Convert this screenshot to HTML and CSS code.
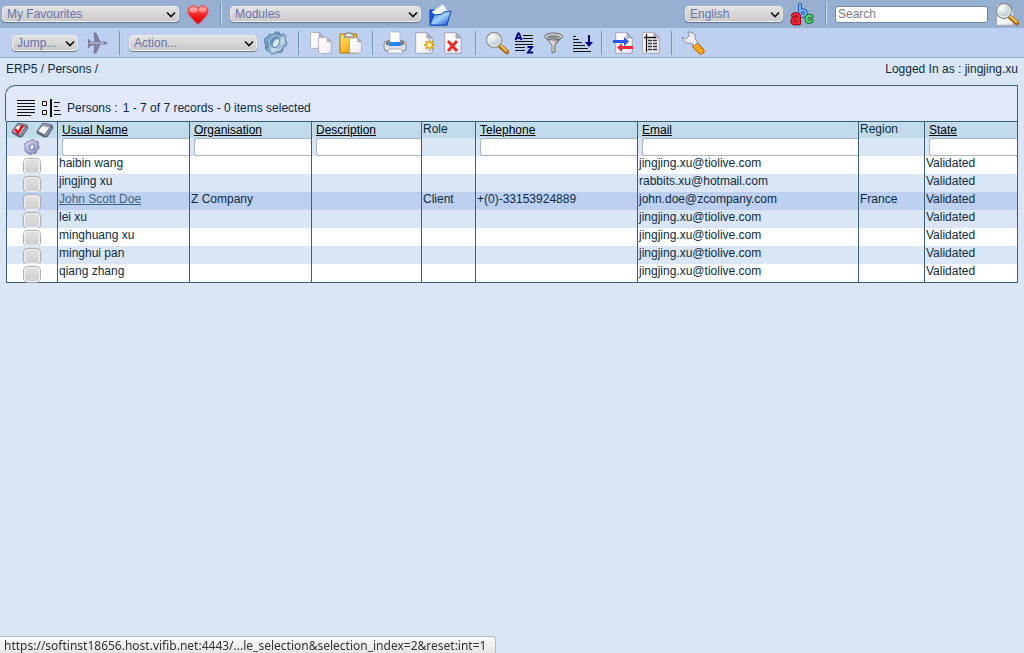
FILE: index.html
```html
<!DOCTYPE html>
<html lang="en">
<head>
<meta charset="utf-8">
<title>ERP5 - Persons</title>
<link rel="stylesheet" href="styles.css">
</head>
<body>
<svg class="defs" aria-hidden="true">
  <defs>
    <linearGradient id="steel" x2="1" y2="1"><stop stop-color="#a8c6de"/><stop offset=".4" stop-color="#5f8db3"/><stop offset=".6" stop-color="#bfd6e8"/><stop offset="1" stop-color="#386489"/></linearGradient>
    <linearGradient id="violet" x2="1" y2="1"><stop stop-color="#dedff5"/><stop offset="1" stop-color="#6f70a6"/></linearGradient>
    <linearGradient id="paper" x2="1" y2="1"><stop stop-color="#fff"/><stop offset=".6" stop-color="#f6f6fa"/><stop offset="1" stop-color="#dfe0ea"/></linearGradient>
    <linearGradient id="gold" x2="1" y2="1"><stop stop-color="#ffe98b"/><stop offset=".5" stop-color="#fbbd2d"/><stop offset="1" stop-color="#e08a00"/></linearGradient>
    <linearGradient id="metal" x2="1"><stop stop-color="#666"/><stop offset=".4" stop-color="#eee"/><stop offset="1" stop-color="#555"/></linearGradient>
    <linearGradient id="red" x2="0" y2="1"><stop stop-color="#ff8a80"/><stop offset=".5" stop-color="#f51f1f"/><stop offset="1" stop-color="#d90000"/></linearGradient>
    <linearGradient id="blue" x2="1" y2="1"><stop stop-color="#1c63e8"/><stop offset=".5" stop-color="#a5d4ff"/><stop offset="1" stop-color="#0b3fc4"/></linearGradient>
    <radialGradient id="glass" cx=".35" cy=".3"><stop stop-color="#fff"/><stop offset="1" stop-color="#c3d3d3"/></radialGradient>
    <symbol id="chevron" viewBox="0 0 10 7"><path d="M1 1.500l4 4 4-4" fill="none" stroke="#111" stroke-width="1.700"/></symbol>
    <symbol id="page" viewBox="0 0 18 22"><path d="M.7.7h11.600l5 5v15.600H.7z" fill="url(#paper)" stroke="#a2a4b4" stroke-width="1"/><path d="M12 1v5h5z" fill="#b9bbca" stroke="#8f91a2" stroke-width=".8"/></symbol>
    <symbol id="gear" viewBox="0 0 24 24"><path d="M9 4l2-3 4 0 1 3 4-1 2 2-1 4 2 2-1 4-3 1 0 4-3 2-3-1-2 2-4 0-1-3-3 0-2-3 1-3-2-3 1-4 3-1 1-3z" stroke-linejoin="round" stroke-width="1"/><ellipse cx="12" cy="12" rx="7" ry="7.500" fill="none" stroke="#fff" stroke-opacity=".55"/><ellipse cx="12" cy="12" rx="3.200" ry="4.800" transform="rotate(28 12 12)" fill="#dce7f6"/></symbol>
    <symbol id="lens" viewBox="0 0 24 24"><path d="M15 15l7 6" stroke="#a86412" stroke-width="4.500" stroke-linecap="round"/><path d="M15.500 14.500l6 5.500" stroke="#ffc64c" stroke-width="2" stroke-linecap="round"/><circle cx="9" cy="9" r="7.500" fill="url(#glass)" stroke="#8b9393" stroke-width="1.300"/><circle cx="9" cy="9" r="6.200" fill="none" stroke="#f5f7f7"/></symbol>
    <symbol id="book" viewBox="0 0 18 16"><path d="M7 1l9 2 1 3-6 9-3 0-7-4 0-2z" fill="#686a80" stroke="#55576c" stroke-width=".7"/><path d="M6.500 3.500l7 2-5 7-6.500-3.500z" fill="#fafafd" stroke="#9b9dae" stroke-width=".5"/><path d="M7 1.500l8 2-1.300 1.800-7.200-2z" fill="#9a9cb0"/><path d="M15.500 6l-6 8" stroke="#c9cad6" stroke-width=".8"/></symbol>
  </defs>
</svg>

<header class="topbar">
  <div class="group">
    <span class="picker favourites"><select aria-label="Favourites"><option>My Favourites</option></select><svg class="arrow"><use href="#chevron"/></svg></span>
    <button class="icon" aria-label="Go to favourite"><svg viewBox="0 0 24 24"><path d="M12 22.500C8 18 2 14 2 9c0-6 7-7 10-3 3-4 10-3 10 3 0 5-6 9-10 13.500z" fill="url(#red)" stroke="#cf4850" stroke-width=".8"/><ellipse cx="7.500" cy="8" rx="4" ry="2.500" fill="#fff" opacity=".4"/><ellipse cx="16.500" cy="8" rx="3.500" ry="2.400" fill="#fff" opacity=".35"/></svg></button>
  </div>
  <div class="group">
    <span class="picker modules"><select aria-label="Modules"><option>Modules</option></select><svg class="arrow"><use href="#chevron"/></svg></span>
    <button class="icon" aria-label="Open module"><svg viewBox="0 0 24 24"><path d="M2 8h5l2 2h10v13H2z" fill="#1557dc" stroke="#0d3db0"/><path d="M4 10l11-8 5 8-9 6z" fill="#f8fbff" stroke="#aabfe3" stroke-width=".7"/><path d="M6 13l8-1 2-2 7-1-4 14H2z" fill="url(#blue)" stroke="#1446c0"/></svg></button>
  </div>
  <div class="group push">
    <span class="picker language"><select aria-label="Language"><option>English</option></select><svg class="arrow"><use href="#chevron"/></svg></span>
    <button class="icon" aria-label="Change language"><svg viewBox="0 0 24 24"><g fill="none" stroke-linecap="round"><path d="M10 3v9M10 9c6-3 8 4 3 5-2 0-3-1-3-3" stroke="#1e58b0" stroke-width="4"/><path d="M10 3v9M10 9c6-3 8 4 3 5-2 0-3-1-3-3" stroke="#77b8ff" stroke-width="2"/><path d="M3 13.500c2-2 6-2 6 1v7M8 16.500c-7-1-7 5-3 5 2 0 3-1 3-3" stroke="#8f0712" stroke-width="4"/><path d="M3 13.500c2-2 6-2 6 1v7M8 16.500c-7-1-7 5-3 5 2 0 3-1 3-3" stroke="#f32736" stroke-width="2.200"/><path d="M21.500 14.500c-3-2-5.500 0-5 3 .5 3 3.500 3 5 1" stroke="#117029" stroke-width="4"/><path d="M21.500 14.500c-3-2-5.500 0-5 3 .5 3 3.500 3 5 1" stroke="#5fdf71" stroke-width="2"/></g></svg></button>
  </div>
  <form class="group">
    <input class="search" type="text" placeholder="Search" aria-label="Search">
    <button class="icon" type="button" aria-label="Run search"><svg viewBox="0 0 24 24"><use href="#page" x="1" y="2" width="18" height="22"/><use href="#lens" width="24" height="24"/></svg></button>
  </form>
</header>

<nav class="toolbar" aria-label="Actions">
  <div class="group">
    <span class="picker jump"><select aria-label="Jump"><option>Jump...</option></select><svg class="arrow"><use href="#chevron"/></svg></span>
    <button class="icon" aria-label="Jump"><svg viewBox="0 0 24 24"><path d="M3 8l3 3h4L9 2h2l4 9h5l2 1-2 1h-5l-4 9H9l1-8H6l-3 3 1-4z" fill="#8384a2" stroke="#686a88" stroke-width=".8"/><path d="M5 12h14" stroke="#d7d8e8"/></svg></button>
  </div>
  <div class="group">
    <span class="picker action"><select aria-label="Action"><option>Action...</option></select><svg class="arrow"><use href="#chevron"/></svg></span>
    <button class="icon" aria-label="Run action"><svg viewBox="0 0 24 24" fill="url(#steel)" stroke="#5885ab"><use href="#gear" width="24" height="24"/></svg></button>
  </div>
  <div class="group wide">
    <button class="icon" aria-label="Copy"><svg viewBox="0 0 24 24"><use href="#page" x="1" y="1" width="14" height="17"/><use href="#page" x="9" y="6" width="14" height="17"/></svg></button>
    <button class="icon" aria-label="Paste"><svg viewBox="0 0 24 24"><rect x="2" y="3" width="17" height="19" rx="1" fill="url(#gold)" stroke="#a96e00"/><path d="M6 6c0-3 2-2 3-4h4c0 2 3 1 3 4z" fill="#e5e6ec" stroke="#71737e"/><use href="#page" x="11" y="6" width="13" height="17"/></svg></button>
  </div>
  <div class="group wide">
    <button class="icon" aria-label="Print"><svg viewBox="0 0 24 24"><rect x="1" y="10" width="22" height="10" rx="3" fill="#dedee4" stroke="#85858d"/><path d="M3 11l3-2h12l3 2v3H3z" fill="#777984"/><path d="M7 1h10v12H7z" fill="#fafcff" stroke="#a8b6cc" stroke-width=".7"/><path d="M7 11h10l1 4H6z" fill="#1e86ee"/><path d="M6 18h12l2 4H4z" fill="#f7f7fa" stroke="#9b9ba5" stroke-width=".7"/></svg></button>
    <button class="icon" aria-label="New"><svg viewBox="0 0 24 24"><use href="#page" x="3" y="1" width="18" height="22"/><path d="M17.500 8l1 3.500 3-1.500-1.500 3 3 1-3 1 1.500 3-3-1.500-1 3.500-1-3.500-3 1.500 1.500-3-3-1 3-1-1.500-3 3 1.500z" fill="#f5c543" stroke="#c68b08" stroke-width=".7"/><circle cx="17.500" cy="14" r="2" fill="#fff6a0"/></svg></button>
    <button class="icon" aria-label="Delete"><svg viewBox="0 0 24 24"><use href="#page" x="3" y="1" width="18" height="22"/><path d="M7 10l9 10M16 10L7 20" stroke="#f5281d" stroke-width="2.800"/></svg></button>
  </div>
  <div class="group tight">
    <button class="icon" aria-label="Find"><svg viewBox="0 0 24 24"><use href="#lens" width="24" height="24"/></svg></button>
    <button class="icon" aria-label="Sort alphabetically"><svg viewBox="0 0 24 24"><path d="M10 4.500h10M10 7.500h10M2 10.500h18M2 13.500h18M2 16.500h10M2 19.500h10" stroke="#111" stroke-width="1.200"/><path d="M2.500 9L5 2.500h1L8.500 9M3.500 7h4M14.500 16h4.500l-4 5.500h5" fill="none" stroke="#00008c" stroke-width="2"/></svg></button>
    <button class="icon" aria-label="Filter"><svg viewBox="0 0 24 24"><path d="M4 6l7 8v8l3-1v-7l7-8z" fill="url(#metal)" stroke="#555" stroke-width=".8"/><ellipse cx="12.500" cy="5.500" rx="9" ry="3.500" fill="#d2d2d2" stroke="#666"/><ellipse cx="12.500" cy="6" rx="6.500" ry="2" fill="#8c8c8c"/></svg></button>
    <button class="icon" aria-label="Sort"><svg viewBox="0 0 24 24"><path d="M4 5.500h3M4 8.500h6M4 11.500h9M4 14.500h12M4 17.500h15M4 20.500h18" stroke="#111" stroke-width="1.200"/><path d="M20 4v8" stroke="#00008c" stroke-width="2"/><path d="M16 11h8l-4 5z" fill="#00008c"/></svg></button>
  </div>
  <div class="group tight">
    <button class="icon" aria-label="Import and export"><svg viewBox="0 0 24 24"><use href="#page" x="4" y="1" width="18" height="22"/><path d="M2 9h11V6l5 4.500-5 4.500v-3H2z" fill="#2855f5"/><path d="M22 15H11v-3l-5 4.500 5 4.500v-3h11z" fill="#f5283a"/></svg></button>
    <button class="icon" aria-label="Configure list"><svg viewBox="0 0 24 24"><use href="#page" x="3" y="1" width="18" height="22"/><path d="M7.500 3v18M5 6.500h12" stroke="#111" stroke-width="1.300"/><path d="M9 9.500h9M9 12.500h9M9 15.500h9M9 18.500h9" stroke="#333" stroke-width="1.400" stroke-dasharray="4 1"/></svg></button>
  </div>
  <div class="group">
    <button class="icon" aria-label="Preferences"><svg viewBox="0 0 24 24"><path d="M15 15l5 5" stroke="#c46c00" stroke-width="7" stroke-linecap="round"/><path d="M15 15l5 5" stroke="#ffa51f" stroke-width="5" stroke-linecap="round"/><path d="M7 1c6 0 8 3 7 7l3 3-4 4-3-3c-4 1-8-1-9-6l4 2 3-3z" fill="#edeef5" stroke="#81839a" stroke-width=".9"/></svg></button>
  </div>
</nav>

<main>
  <div class="crumbs">
    <span><a href="#">ERP5</a> / <a href="#">Persons</a> /</span>
    <span>Logged In as : jingjing.xu</span>
  </div>

  <div class="list-head">
    <svg class="view-lines" viewBox="0 0 20 18"><path d="M1 1.500h18M1 4.500h18M1 7.500h18M1 10.500h18M1 13.500h18M1 16.500h14" stroke="#111" stroke-width="1.200"/></svg>
    <svg class="view-tree" viewBox="0 0 20 18"><path d="M1.500 2.500h4v4h-4zM1.500 11.500h4v4h-4z" fill="#fbe9dc" stroke="#111"/><path d="M10 0v18" stroke="#111" stroke-width="2"/><path d="M13 3.500h6M13 7.500h4M13 11.500h6M13 15.500h7" stroke="#111"/></svg>
    <span class="list-title">Persons :</span>
    <span>1 - 7 of 7 records - 0 items selected</span>
  </div>

  <table class="list">
    <colgroup><col class="c-pick"><col class="c-name"><col class="c-org"><col class="c-desc"><col class="c-role"><col class="c-phone"><col class="c-mail"><col class="c-region"><col class="c-state"></colgroup>
    <thead>
      <tr class="titles">
        <th><div class="marks"><button aria-label="Check all"><svg viewBox="0 0 18 16"><use href="#book" width="18" height="16"/><path d="M4 7l3 4 5-8" fill="none" stroke="#f0101c" stroke-width="2.600"/></svg></button><button aria-label="Uncheck all"><svg viewBox="0 0 18 16"><use href="#book" width="18" height="16"/></svg></button></div></th>
        <th><a href="#">Usual Name</a></th><th><a href="#">Organisation</a></th><th><a href="#">Description</a></th><th>Role</th><th><a href="#">Telephone</a></th><th><a href="#">Email</a></th><th>Region</th><th><a href="#">State</a></th>
      </tr>
      <tr class="filters">
        <td class="pick"><button aria-label="Apply filters"><svg viewBox="0 0 24 24" fill="url(#violet)" stroke="#66689c"><use href="#gear" width="24" height="24"/></svg></button></td>
        <td><input type="text" aria-label="Filter usual name"></td><td><input type="text" aria-label="Filter organisation"></td><td><input type="text" aria-label="Filter description"></td><td></td><td><input type="text" aria-label="Filter telephone"></td><td><input type="text" aria-label="Filter email"></td><td></td><td><input type="text" aria-label="Filter state"></td>
      </tr>
    </thead>
    <tbody>
      <tr><td class="pick"><input type="checkbox" aria-label="Select haibin wang"></td><td><a href="#">haibin wang</a></td><td></td><td></td><td></td><td></td><td>jingjing.xu@tiolive.com</td><td></td><td>Validated</td></tr>
      <tr><td class="pick"><input type="checkbox" aria-label="Select jingjing xu"></td><td><a href="#">jingjing xu</a></td><td></td><td></td><td></td><td></td><td>rabbits.xu@hotmail.com</td><td></td><td>Validated</td></tr>
      <tr class="current"><td class="pick"><input type="checkbox" aria-label="Select John Scott Doe"></td><td><a href="#">John Scott Doe</a></td><td>Z Company</td><td></td><td>Client</td><td>+(0)-33153924889</td><td>john.doe@zcompany.com</td><td>France</td><td>Validated</td></tr>
      <tr><td class="pick"><input type="checkbox" aria-label="Select lei xu"></td><td><a href="#">lei xu</a></td><td></td><td></td><td></td><td></td><td>jingjing.xu@tiolive.com</td><td></td><td>Validated</td></tr>
      <tr><td class="pick"><input type="checkbox" aria-label="Select minghuang xu"></td><td><a href="#">minghuang xu</a></td><td></td><td></td><td></td><td></td><td>jingjing.xu@tiolive.com</td><td></td><td>Validated</td></tr>
      <tr><td class="pick"><input type="checkbox" aria-label="Select minghui pan"></td><td><a href="#">minghui pan</a></td><td></td><td></td><td></td><td></td><td>jingjing.xu@tiolive.com</td><td></td><td>Validated</td></tr>
      <tr><td class="pick"><input type="checkbox" aria-label="Select qiang zhang"></td><td><a href="#">qiang zhang</a></td><td></td><td></td><td></td><td></td><td>jingjing.xu@tiolive.com</td><td></td><td>Validated</td></tr>
    </tbody>
  </table>
</main>

<div class="status">https://softinst18656.host.vifib.net:4443/...le_selection&amp;selection_index=2&amp;reset:int=1</div>
</body>
</html>
```

FILE: styles.css
```css
* { box-sizing: border-box; }

body {
  margin: 0;
  background: #dae6f6;
  color: #0c2b40;
  font: 12px/14px "Liberation Sans", Arial, sans-serif;
}

a { color: inherit; text-decoration: none; }
button { padding: 0; border: 0; background: none; }
svg { display: block; }
.defs { position: absolute; width: 0; height: 0; }

/* bars */
.topbar, .toolbar { display: flex; align-items: center; }
.topbar { height: 28px; background: #97afd1; }
.toolbar { height: 30px; background: #bdd0f0; border-bottom: 1px solid #97afd1; }

.group {
  display: flex;
  align-items: center;
  gap: 7px;
  height: 24px;
  padding: 0 10px 0 9px;
  border-left: 1px solid #7395b4;
  box-shadow: inset 1px 0 #c4d9ea;
}
.group:first-child { border-left: 0; box-shadow: none; padding-left: 2px; }
.toolbar .group:first-child { padding-left: 12px; }
.toolbar .wide { gap: 5px; padding-left: 10px; }
.toolbar .tight { gap: 4px; padding-right: 8px; }
.push { margin-left: auto; padding-right: 11px; border-left: 0; box-shadow: none; }
.topbar form { padding-right: 5px; }

.icon, .icon svg { width: 24px; height: 24px; }

/* drop-downs */
.picker { position: relative; height: 16px; }
.picker select {
  appearance: none;
  display: block;
  width: 100%;
  height: 16px;
  padding: 0 16px 0 4px;
  border: 1px solid #eeeeee;
  border-radius: 4px;
  background: linear-gradient(#e2e2e2, #cbcbcb);
  box-shadow: 0 1px 1px #66758c;
  color: #6870ae;
  font: inherit;
}
.arrow { position: absolute; right: 3px; top: 5px; width: 10px; height: 7px; pointer-events: none; }
.favourites { width: 177px; }
.modules { width: 191px; }
.language { width: 98px; }
.jump { width: 66px; }
.action { width: 128px; }

.search {
  width: 153px;
  height: 17px;
  padding: 0 2px;
  border: 1px solid #7286a5;
  border-radius: 3px;
  background: #fff;
  font: inherit;
}
.search::placeholder { color: #7c7c7c; }

/* content */
main { padding: 0 6px; }
.crumbs { display: flex; justify-content: space-between; padding: 4px 0 9px; }

.list-head {
  display: flex;
  align-items: center;
  gap: 5px;
  height: 36px;
  margin-left: -1px;
  padding: 8px 10px 0;
  border: 1px solid #396a72;
  border-bottom: 0;
  border-top-left-radius: 10px;
  background: #e2e8f9;
}
.view-lines, .view-tree { width: 20px; height: 18px; }
.list-title { margin-left: 1px; }

.list {
  width: 100%;
  table-layout: fixed;
  border: 1px solid #396076;
  border-left: 0;
  border-spacing: 0;
}
.c-pick { width: 51px; }
.c-name { width: 132px; }
.c-org { width: 122px; }
.c-desc { width: 110px; }
.c-role { width: 54px; }
.c-phone { width: 162px; }
.c-mail { width: 221px; }
.c-region { width: 66px; }
.c-state { width: 93px; }

.list th, .list td {
  padding: 0 0 0 1px;
  border-left: 1px solid #396076;
  font-weight: normal;
  text-align: left;
  vertical-align: top;
}
.list .pick { padding: 0; }
.list tr { height: 18px; background: #dae6f6; }
.list .titles { height: 16px; background: #c2dbea; }
.titles a { display: block; padding: 1px 0 0 3px; color: #000; text-decoration: underline; }
.marks { display: flex; justify-content: space-between; padding: 0 3px; }
.marks svg { width: 18px; height: 16px; }

.filters input {
  display: block;
  width: calc(100% - 3px);
  height: 18px;
  margin-left: 3px;
  border: 1px solid #a9b4c7;
  border-right: 0;
  border-radius: 3px 0 0 3px;
  background: #fff;
  font: inherit;
}
.pick button, .pick svg { width: 18px; height: 16px; }
.pick button { display: block; margin: 1px auto; }

.list tbody tr:nth-child(odd) { background: #fff; }
.list tbody tr.current { background: #bdd0f0; }
.current a { color: #41647f; text-decoration: underline; }

.pick input {
  appearance: none;
  display: block;
  width: 16px;
  height: 15px;
  margin: 3px auto 0;
  border: 1px solid #f3f3f3;
  border-radius: 4px;
  background: linear-gradient(#e0e0e0, #d0d0d0);
  box-shadow: 0 0 1px 1px #a8a8a8;
}

.status {
  position: fixed;
  left: 0;
  bottom: 0;
  padding: 2px 9px 0 4px;
  border: 1px solid #bcbcbc;
  border-width: 1px 1px 0 0;
  border-top-right-radius: 4px;
  background: linear-gradient(#fcfcfc, #e4e4e4);
  color: #333;
  font: 12px/14px "Noto Sans", "Open Sans", sans-serif;
}
```
